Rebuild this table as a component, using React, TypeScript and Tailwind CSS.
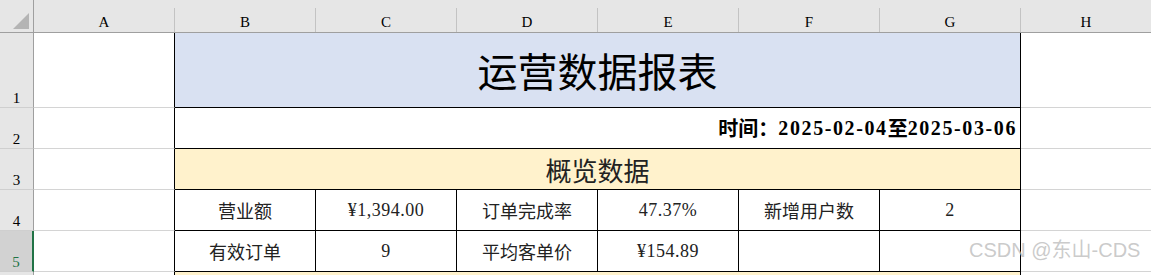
import React from "react";

const cols = ["A", "B", "C", "D", "E", "F", "G", "H"];

const RowHead = ({ n, selected }: { n?: number; selected?: boolean }) => (
  <div
    className={`w-[34px] shrink-0 flex items-end justify-center pb-[1px] border-b border-b-[#cfcfcf] text-[15px] leading-none font-['Liberation_Serif',serif] ${
      selected
        ? "bg-[#d2d2d2] text-[#217346] border-r-2 border-r-[#217346]"
        : "bg-[#e6e6e6] text-black border-r border-r-[#9f9f9f]"
    }`}
  >
    {n}
  </div>
);

const Row = ({
  n,
  h,
  selected,
  children,
}: {
  n?: number;
  h: string;
  selected?: boolean;
  children: React.ReactNode;
}) => (
  <div className={`flex ${h}`}>
    <RowHead n={n} selected={selected} />
    <div className="w-[141px] shrink-0 bg-white border-b border-b-[#d4d4d4] border-r border-r-black" />
    {children}
    <div className="flex-1 bg-white border-b border-b-[#d4d4d4]" />
  </div>
);

const Label = ({ text }: { text: string }) => (
  <div className="w-[141px] shrink-0 flex items-center justify-center border-r border-b border-black text-[18px] text-[#222] font-['Noto_Sans_CJK_SC',sans-serif]">
    {text}
  </div>
);

const Value = ({ text }: { text: string }) => (
  <div className="w-[141px] shrink-0 flex items-center justify-center border-r border-b border-black text-[18px] tracking-[0.5px] text-[#222] font-['Liberation_Serif',serif]">
    {text}
  </div>
);

export default function App() {
  return (
    <div className="relative w-[1151px] h-[275px] overflow-hidden bg-white">
      {/* column headers */}
      <div className="flex h-[33px] bg-[#e6e6e6] border-b border-b-[#9f9f9f]">
        <div className="w-[34px] shrink-0 border-r border-r-[#9f9f9f] flex items-end justify-end pr-[4px] pb-[3px]">
          <svg width="16" height="16" viewBox="0 0 16 16">
            <polygon points="16,0 16,16 0,16" fill="#b4b4b4" />
          </svg>
        </div>
        {cols.map((c, i) => (
          <div
            key={c}
            className={`self-end h-[24px] flex items-center justify-center pt-[4px] text-[15px] text-black font-['Liberation_Serif',serif] ${
              i < cols.length - 1 ? "w-[141px] shrink-0 border-r border-r-[#c3c3c3]" : "flex-1"
            }`}
          >
            {c}
          </div>
        ))}
      </div>

      <Row n={1} h="h-[75px]">
        <div className="w-[846px] shrink-0 flex items-center justify-center border-r border-b border-black bg-[#d9e1f2] text-[40px] text-black font-['Noto_Sans_CJK_SC',sans-serif]">
          运营数据报表
        </div>
      </Row>

      <Row n={2} h="h-[41px]">
        <div className="w-[846px] shrink-0 flex items-center justify-end pr-[3px] border-r border-b border-black bg-white text-[20px] font-bold text-black font-['Noto_Sans_CJK_SC',sans-serif]">
          <span>时间：</span>
          <span className="tracking-[1.6px] font-['Liberation_Serif',serif]">2025-02-04</span>
          <span>至</span>
          <span className="tracking-[1.6px] font-['Liberation_Serif',serif]">2025-03-06</span>
        </div>
      </Row>

      <Row n={3} h="h-[41px]">
        <div className="w-[846px] shrink-0 flex items-center justify-center border-r border-b border-black bg-[#fff2cc] text-[26px] text-[#222] font-['Noto_Sans_CJK_SC',sans-serif]">
          概览数据
        </div>
      </Row>

      <Row n={4} h="h-[41px]">
        <Label text="营业额" />
        <Value text="¥1,394.00" />
        <Label text="订单完成率" />
        <Value text="47.37%" />
        <Label text="新增用户数" />
        <Value text="2" />
      </Row>

      <Row n={5} h="h-[41px]" selected>
        <Label text="有效订单" />
        <Value text="9" />
        <Label text="平均客单价" />
        <Value text="¥154.89" />
        <Value text="" />
        <Value text="" />
      </Row>

      <Row h="h-[41px]">
        <div className="w-[846px] shrink-0 border-r border-b border-black bg-[#fff2cc]" />
      </Row>

      <div className="absolute left-[969px] top-[240px] text-[20px] leading-none text-[#bdbdbd]/80 font-['Liberation_Sans','Noto_Sans_CJK_SC',sans-serif] pointer-events-none">
        CSDN @东山-CDS
      </div>
    </div>
  );
}
